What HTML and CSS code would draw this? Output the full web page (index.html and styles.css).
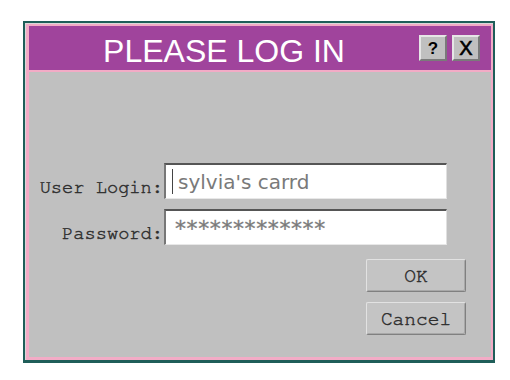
FILE: index.html
```html
<!DOCTYPE html>
<html>
<head>
<meta charset="utf-8">
<link rel="stylesheet" href="styles.css">
</head>
<body>
<div class="page">
  <div class="window">
    <div class="titlebar">
      <div class="title">PLEASE LOG IN</div>
      <div class="tbtns">
        <button class="tbtn help">?</button>
        <button class="tbtn close">X</button>
      </div>
    </div>
    <div class="content">
      <div class="form">
        <label class="label">User Login:</label>
        <div class="input"><span class="caret"></span><span class="val">sylvia's carrd</span></div>
        <label class="label">Password:</label>
        <div class="input"><span class="val pw">*************</span></div>
      </div>
      <div class="actions">
        <button class="btn">OK</button>
        <button class="btn">Cancel</button>
      </div>
    </div>
  </div>
</div>
</body>
</html>
```
FILE: styles.css
```css
* { box-sizing: border-box; }
html, body { margin: 0; padding: 0; background: #ffffff; }
.page { padding: 21px 0 0 23px; }
.window {
  width: 472px;
  height: 342px;
  border: 2px solid #1f5e59;
  border-bottom-width: 3px;
  background: #f3abc6;
  padding: 3px 2px 3px 4px;
  box-shadow: inset 1px 1px 0 #d9d9d9;
  display: flex;
  flex-direction: column;
}
.titlebar {
  height: 46px;
  background: #a0449c;
  border-bottom: 2px solid #f3abc6;
  display: flex;
  align-items: center;
  padding-right: 11px;
}
.title {
  flex: 1;
  text-align: center;
  color: #ffffff;
  font-family: "Liberation Sans", Arial, sans-serif;
  font-size: 32px;
  line-height: 1;
  padding-top: 5px;
}
.tbtns { display: flex; gap: 5px; }
.tbtn {
  width: 28px;
  height: 26px;
  margin: 0;
  padding: 0;
  background: #c0c0c0;
  border: 2px solid;
  border-color: #e6e6e6 #7a7a7a #7a7a7a #e6e6e6;
  color: #000;
  font-family: "Liberation Sans", Arial, sans-serif;
  font-weight: bold;
  line-height: 1;
}
.help { font-size: 17px; }
.close { font-size: 20px; font-weight: normal; -webkit-text-stroke: 0.6px #000; }
.label {
  text-align: right;
  font-family: "Nimbus Mono PS", "FreeMono", "Liberation Mono", "Courier New", monospace;
  font-size: 18.7px;
  color: #2e2e2e;
  -webkit-text-stroke: 0.45px #2e2e2e;
  padding-top: 13px;
}
.content {
  flex: 1;
  background: #c0c0c0;
  display: flex;
  flex-direction: column;
  padding-top: 91px;
}
.form {
  display: grid;
  grid-template-columns: auto 283px;
  column-gap: 1px;
  row-gap: 10px;
  justify-content: end;
  align-items: center;
  margin-right: 44px;
}
.input {
  height: 36px;
  background: #ffffff;
  border-top: 2px solid #555;
  border-left: 2px solid #777;
  border-right: 1px solid #e0e0e0;
  border-bottom: 1px solid #e8e8e8;
  display: flex;
  align-items: center;
  padding-left: 6px;
  font-family: "DejaVu Sans", Verdana, sans-serif;
  font-size: 20px;
  color: #7a7a7a;
}
.caret {
  width: 1px;
  height: 25px;
  background: #444;
  margin-right: 5px;
}
.val { line-height: 1; }
.pw { font-size: 22px; letter-spacing: 0.6px; padding-left: 3px; padding-top: 2px; -webkit-text-stroke: 0.3px #7a7a7a; }
.actions {
  display: flex;
  flex-direction: column;
  align-items: flex-end;
  gap: 10px;
  margin-top: 14px;
  margin-right: 25px;
}
.btn {
  width: 100px;
  height: 33px;
  margin: 0;
  padding: 0;
  background: #c4c4c4;
  border: 1px solid;
  border-color: #e2e2e2 #808080 #808080 #e2e2e2;
  border-radius: 2px;
  box-shadow: inset -1px -1px 0 #a8a8a8;
  font-family: "Nimbus Mono PS", "FreeMono", "Liberation Mono", "Courier New", monospace;
  font-size: 19.5px;
  color: #2e2e2e;
  -webkit-text-stroke: 0.45px #2e2e2e;
}
```
